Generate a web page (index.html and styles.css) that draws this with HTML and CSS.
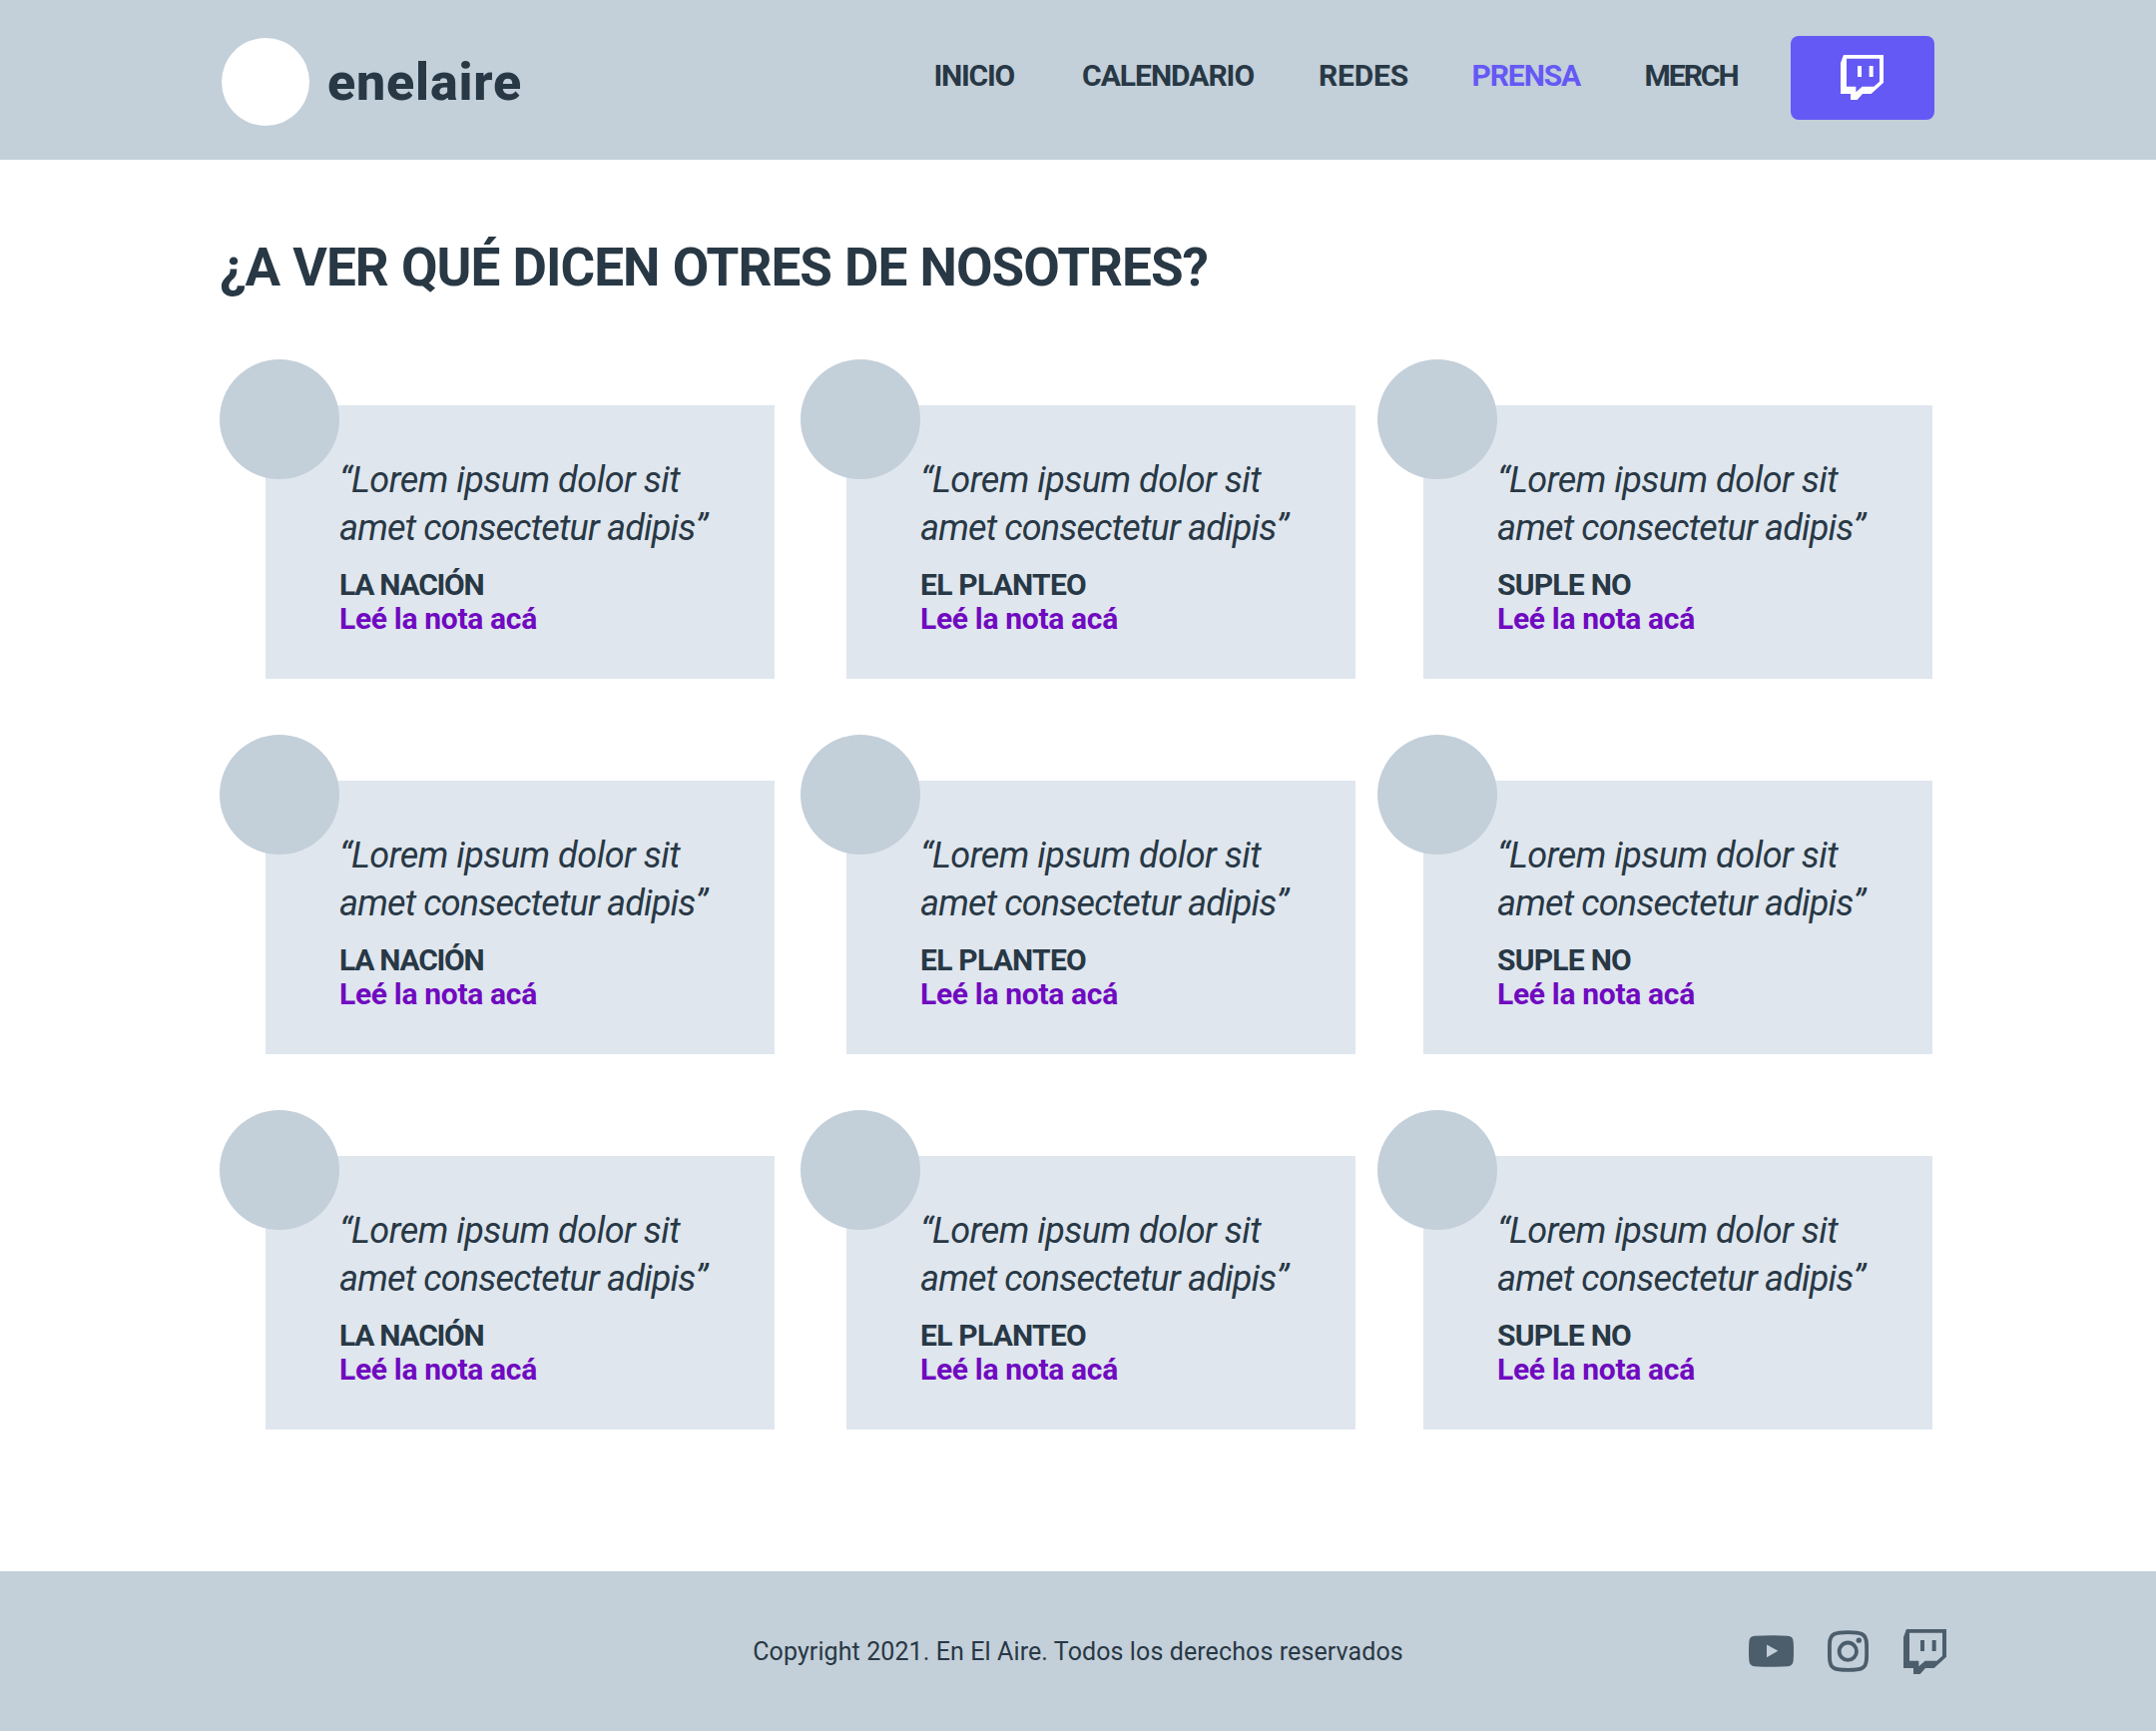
FILE: index.html
```html
<!DOCTYPE html>
<html lang="es">
<head>
  <meta charset="utf-8">
  <title>enelaire – Prensa</title>
  <link rel="stylesheet" href="styles.css">
</head>
<body>
  <svg width="0" height="0" class="sprite" aria-hidden="true">
    <symbol id="twitch" viewBox="0 0 129 135">
      <path fill-rule="evenodd" d="M9 0H129V83L92 117H66L50 135H30V117H0V24ZM18 11V95H46V112L65 95H100L117 80V11ZM51 33H63V66H51ZM86 33H98V66H86Z"/>
    </symbol>
    <symbol id="youtube" viewBox="0 0 135 95">
      <path fill-rule="evenodd" d="M18 2Q67 -1.500 117 2Q133 3 134 19Q136 47 134 76Q133 92 117 93.500Q67 96.500 18 93.500Q2 92 1 76Q-1 47 1 19Q2 3 18 2ZM54 28V66L88 46.500Z"/>
    </symbol>
    <symbol id="instagram" viewBox="0 0 123 125">
      <path fill="none" stroke="currentColor" stroke-width="11.500" d="M61.500 6C101 6 116 9 117 40Q118 62.500 117 85C116 116 101 119 61.500 119C22 119 7 116 6 85Q5.500 62.500 6 40C7 9 22 6 61.500 6Z"/>
      <circle cx="61" cy="63" r="26" fill="none" stroke="currentColor" stroke-width="11.500"/>
      <circle cx="94" cy="30" r="8"/>
    </symbol>
  </svg>

  <header class="header">
    <a class="brand"><span class="brand-logo"></span><span class="brand-name">enelaire</span></a>
    <nav class="nav">
      <a class="nav-link nav-inicio">INICIO</a>
      <a class="nav-link nav-calendario">CALENDARIO</a>
      <a class="nav-link nav-redes">REDES</a>
      <a class="nav-link nav-prensa active">PRENSA</a>
      <a class="nav-link nav-merch">MERCH</a>
      <a class="nav-button"><svg class="icon-twitch"><use href="#twitch"/></svg></a>
    </nav>
  </header>

  <main class="main">
    <h1 class="title">¿A VER QUÉ DICEN OTRES DE NOSOTRES?</h1>
    <section class="cards">
      <article class="item"><div class="card"><p class="quote"><span class="line-a">“Lorem ipsum dolor sit</span><span class="line-b">amet consectetur adipis”</span></p><h2 class="source src-nacion">LA NACIÓN</h2><a class="more">Leé la nota acá</a></div><span class="avatar"></span></article>
      <article class="item"><div class="card"><p class="quote"><span class="line-a">“Lorem ipsum dolor sit</span><span class="line-b">amet consectetur adipis”</span></p><h2 class="source">EL PLANTEO</h2><a class="more">Leé la nota acá</a></div><span class="avatar"></span></article>
      <article class="item"><div class="card"><p class="quote"><span class="line-a">“Lorem ipsum dolor sit</span><span class="line-b">amet consectetur adipis”</span></p><h2 class="source">SUPLE NO</h2><a class="more">Leé la nota acá</a></div><span class="avatar"></span></article>
      <article class="item"><div class="card"><p class="quote"><span class="line-a">“Lorem ipsum dolor sit</span><span class="line-b">amet consectetur adipis”</span></p><h2 class="source src-nacion">LA NACIÓN</h2><a class="more">Leé la nota acá</a></div><span class="avatar"></span></article>
      <article class="item"><div class="card"><p class="quote"><span class="line-a">“Lorem ipsum dolor sit</span><span class="line-b">amet consectetur adipis”</span></p><h2 class="source">EL PLANTEO</h2><a class="more">Leé la nota acá</a></div><span class="avatar"></span></article>
      <article class="item"><div class="card"><p class="quote"><span class="line-a">“Lorem ipsum dolor sit</span><span class="line-b">amet consectetur adipis”</span></p><h2 class="source">SUPLE NO</h2><a class="more">Leé la nota acá</a></div><span class="avatar"></span></article>
      <article class="item"><div class="card"><p class="quote"><span class="line-a">“Lorem ipsum dolor sit</span><span class="line-b">amet consectetur adipis”</span></p><h2 class="source src-nacion">LA NACIÓN</h2><a class="more">Leé la nota acá</a></div><span class="avatar"></span></article>
      <article class="item"><div class="card"><p class="quote"><span class="line-a">“Lorem ipsum dolor sit</span><span class="line-b">amet consectetur adipis”</span></p><h2 class="source">EL PLANTEO</h2><a class="more">Leé la nota acá</a></div><span class="avatar"></span></article>
      <article class="item"><div class="card"><p class="quote"><span class="line-a">“Lorem ipsum dolor sit</span><span class="line-b">amet consectetur adipis”</span></p><h2 class="source">SUPLE NO</h2><a class="more">Leé la nota acá</a></div><span class="avatar"></span></article>
    </section>
  </main>

  <footer class="footer">
    <p class="copyright">Copyright 2021. En El Aire. Todos los derechos reservados</p>
    <div class="social">
      <svg class="icon-youtube"><use href="#youtube"/></svg>
      <svg class="icon-instagram"><use href="#instagram"/></svg>
      <svg class="icon-twitch"><use href="#twitch"/></svg>
    </div>
  </footer>
</body>
</html>
```
FILE: styles.css
```css
* { box-sizing: border-box; }

body {
  margin: 0;
  background: #fff;
  color: #283845;
  font-family: Roboto, "Liberation Sans", sans-serif;
}

h1, h2, p { margin: 0; }
svg { display: block; fill: currentColor; }
.sprite { position: absolute; }

/* Header */
.header {
  display: flex;
  justify-content: space-between;
  align-items: flex-start;
  height: 160px;
  padding: 36px 222px 0;
  background: #c3cfd9;
}
.brand {
  display: flex;
  align-items: center;
  gap: 18px;
  padding-top: 2px;
}
.brand-logo {
  width: 88px;
  height: 88px;
  border-radius: 50%;
  background: #fff;
}
.brand-name {
  padding-top: 2px;
  font-size: 52px;
  line-height: 60px;
  font-weight: 800;
  letter-spacing: 0.8px;
}
.nav {
  display: grid;
  grid-template-columns: 148.500px 237px 153.500px 173px 147px 144px;
  align-items: center;
}
.nav-link {
  padding: 0 0 4px 0.500px;
  font-size: 30px;
  line-height: 36px;
  font-weight: 700;
}
.nav-inicio { letter-spacing: -1.2px; }
.nav-calendario { letter-spacing: -1px; }
.nav-redes { letter-spacing: -0.2px; }
.nav-prensa { letter-spacing: -1.1px; }
.nav-merch { letter-spacing: -2px; }
.active { color: #6559f5; }
.nav-button {
  display: flex;
  justify-content: center;
  height: 84px;
  padding: 19px 1px 0 0;
  border-radius: 8px;
  background: #6559f5;
  color: #fff;
}

.icon-twitch { width: 43px; height: 45px; }
.icon-youtube { width: 45px; height: 32px; }
.icon-instagram { width: 41px; height: 42px; }

/* Press quotes */
.main {
  height: 1414px;
  padding: 76px 220px 0;
}
.title {
  font-size: 53px;
  line-height: 64px;
  font-weight: 700;
  letter-spacing: -0.95px;
  word-spacing: 0.9px;
}
.cards {
  display: grid;
  grid-template-columns: 582px 578px 556px;
  grid-auto-rows: 320px;
  row-gap: 56px;
  padding-top: 60px;
}
.item {
  position: relative;
  width: 556px;
  padding: 46px 0 0 46px;
}
.card {
  height: 274px;
  padding: 51px 0 0 74px;
  background: #dfe6ee;
}
.avatar {
  position: absolute;
  top: 0;
  left: 0;
  width: 120px;
  height: 120px;
  border-radius: 50%;
  background: #c3cfd9;
}
.quote {
  font-size: 36px;
  line-height: 48px;
  font-style: italic;
}
.quote span { display: block; }
.line-a { letter-spacing: -0.5px; }
.line-b { letter-spacing: -0.82px; }
.source {
  margin-top: 16px;
  font-size: 30px;
  line-height: 34px;
  font-weight: 700;
  letter-spacing: -0.75px;
}
.src-nacion { letter-spacing: -1.25px; }
.more {
  display: block;
  color: #700ac0;
  font-size: 30px;
  line-height: 34px;
  font-weight: 700;
  letter-spacing: -0.32px;
}

/* Footer */
.footer {
  display: grid;
  grid-template-columns: 1fr auto 1fr;
  align-items: center;
  height: 160px;
  background: #c3cfd9;
}
.copyright {
  grid-column: 2;
  padding-top: 2px;
  font-size: 25px;
  line-height: 30px;
  letter-spacing: 0.1px;
}
.social {
  display: flex;
  justify-content: flex-end;
  align-items: center;
  gap: 34px;
  padding-right: 210px;
  color: #4c5d6b;
}
.icon-instagram { margin-right: 1px; }
```
